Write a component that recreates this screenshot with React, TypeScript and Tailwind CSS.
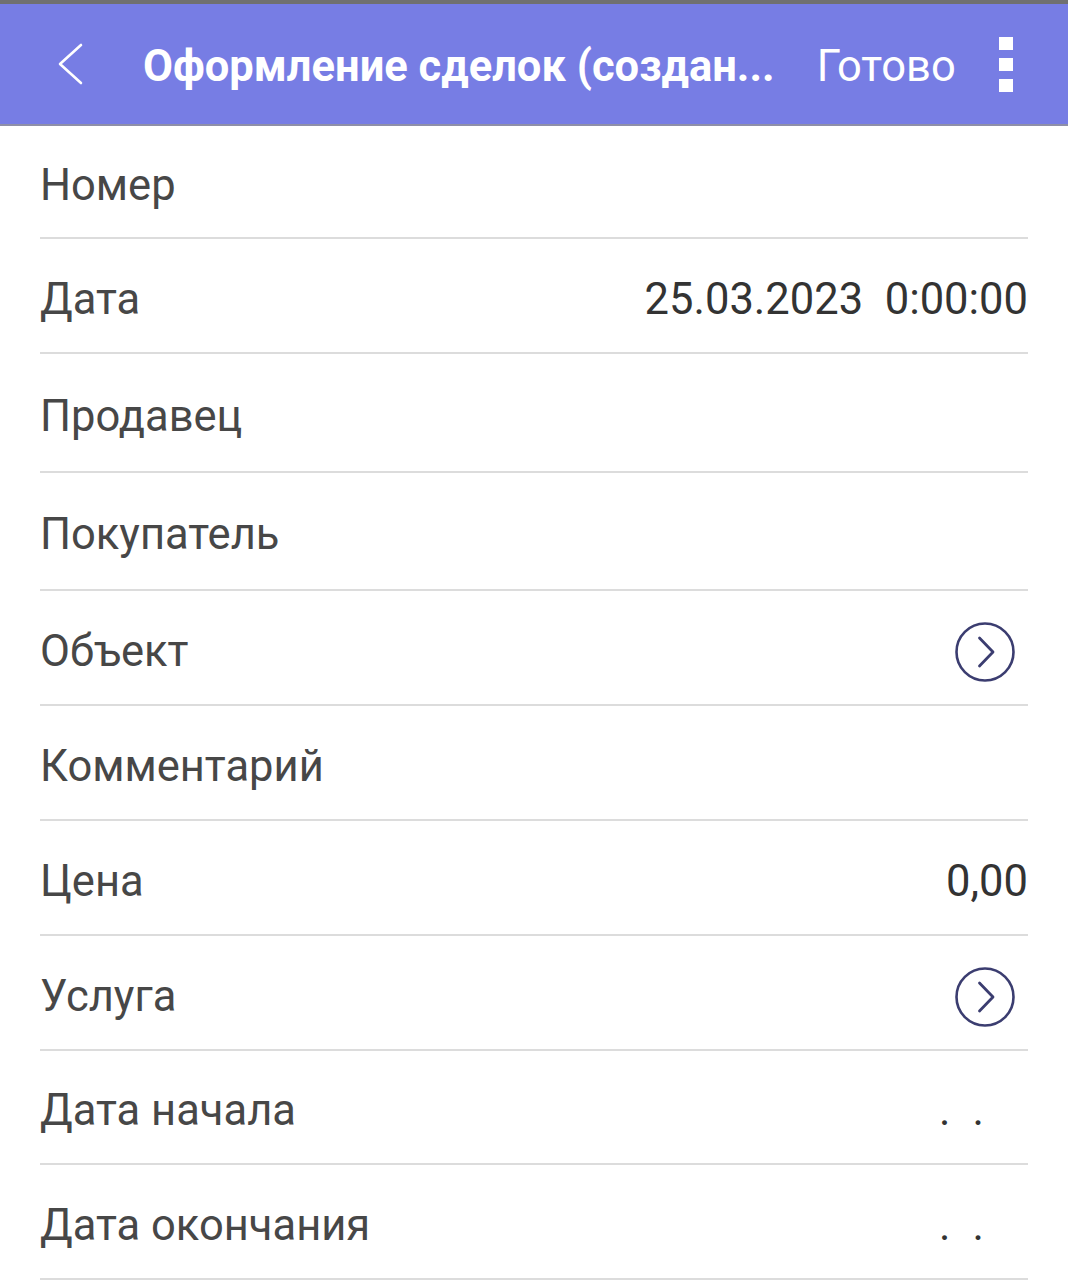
import { ReactNode } from "react";

function CircleArrow() {
  return (
    <svg width="60" height="60" viewBox="0 0 60 60" fill="none" aria-hidden>
      <circle cx="30" cy="30" r="28.5" stroke="#3b3d70" strokeWidth="2.6" />
      <path d="M24.5 16 L38 30 L24.5 44" stroke="#3b3d70" strokeWidth="2.8" strokeLinecap="round" strokeLinejoin="round" />
    </svg>
  );
}

function EmptyDate() {
  return (
    <div className="mr-[44px] flex items-end gap-[22px] leading-none text-[#333]">
      <span>.</span>
      <span>.</span>
    </div>
  );
}

const rows: { label: string; h: string; value?: ReactNode }[] = [
  { label: "Номер", h: "h-[113px]" },
  { label: "Дата", h: "h-[115px]", value: <span>25.03.2023&nbsp;&nbsp;0:00:00</span> },
  { label: "Продавец", h: "h-[119px]" },
  { label: "Покупатель", h: "h-[118px]" },
  { label: "Объект", h: "h-[115px]", value: <div className="mr-[13px]"><CircleArrow /></div> },
  { label: "Комментарий", h: "h-[115px]" },
  { label: "Цена", h: "h-[115px]", value: <span>0,00</span> },
  { label: "Услуга", h: "h-[115px]", value: <div className="mr-[13px]"><CircleArrow /></div> },
  { label: "Дата начала", h: "h-[114px]", value: <EmptyDate /> },
  { label: "Дата окончания", h: "h-[115px]", value: <EmptyDate /> },
];

export default function App() {
  return (
    <div className="min-h-[1280px] bg-white font-['Roboto',sans-serif]">
      <header className="border-t-4 border-b-2 border-t-[#707070] border-b-[#8e8fa8] bg-[#777de4]">
        <div className="flex h-[120px] items-center text-white">
          <div className="flex w-[143px] items-center pl-[55px]">
            <svg width="30" height="44" viewBox="0 0 30 44" fill="none" aria-hidden>
              <path d="M26 3 L5 22 L26 41" stroke="white" strokeWidth="2.6" strokeLinecap="round" strokeLinejoin="round" />
            </svg>
          </div>
          <h1 className="whitespace-nowrap pt-[6px] text-[43.5px] font-bold leading-none">Оформление сделок (создан...</h1>
          <span className="ml-[42px] pt-[6px] text-[43.5px] leading-none">Готово</span>
          <div className="ml-[43px] flex flex-col gap-[8px]">
            <span className="h-[13px] w-[14px] bg-white" />
            <span className="h-[13px] w-[14px] bg-white" />
            <span className="h-[13px] w-[14px] bg-white" />
          </div>
        </div>
      </header>
      <div className="mx-[40px]">
        {rows.map((r) => (
          <div
            key={r.label}
            className={`${r.h} flex items-center justify-between border-b-2 border-[#dcdcdc] pt-[8px]`}
          >
            <span className="text-[43.5px] leading-none text-[#474747]">{r.label}</span>
            {r.value && <div className="text-[43.5px] leading-none text-[#333]">{r.value}</div>}
          </div>
        ))}
      </div>
    </div>
  );
}
